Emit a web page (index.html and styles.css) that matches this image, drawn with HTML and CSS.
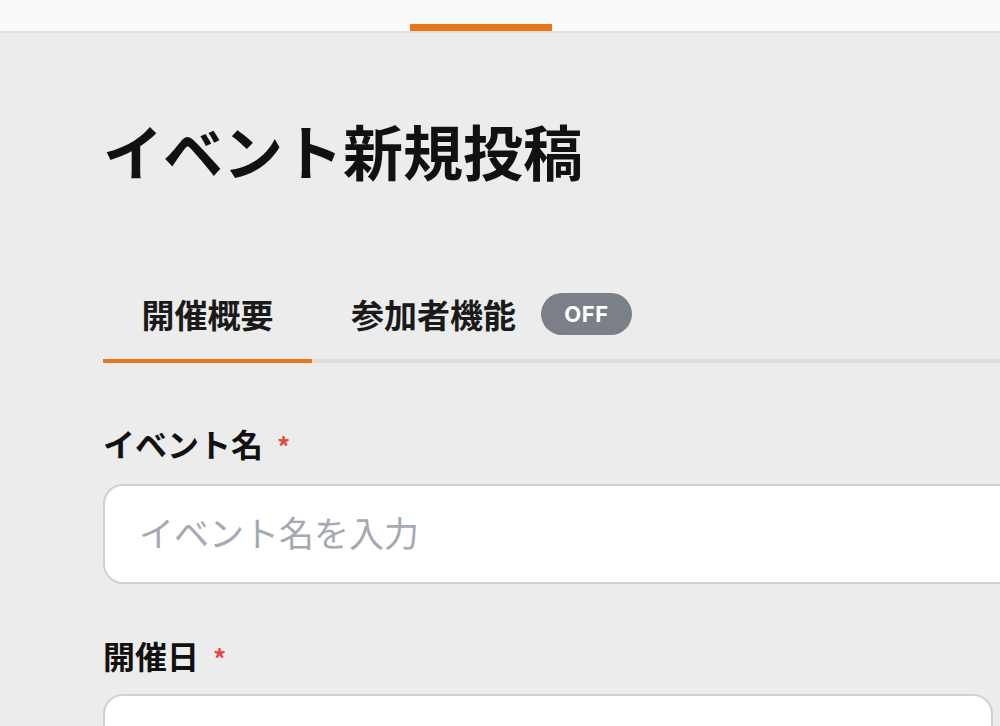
FILE: index.html
```html
<!DOCTYPE html>
<html lang="ja">
<head>
<meta charset="utf-8">
<title>イベント新規投稿</title>
<link rel="stylesheet" href="styles.css">
</head>
<body>
<header class="topbar">
  <div class="topbar-spacer"></div>
  <div class="topbar-active"></div>
</header>
<main class="page">
  <h1 class="page-title">イベント新規投稿</h1>
  <nav class="tabs">
    <div class="tab tab-active">開催概要</div>
    <div class="tab">参加者機能<span class="badge">OFF</span></div>
  </nav>
  <section class="form">
    <div class="field">
      <label class="label">イベント名<span class="req">*</span></label>
      <div class="input input-wide"><span class="placeholder">イベント名を入力</span></div>
    </div>
    <div class="field">
      <label class="label">開催日<span class="req">*</span></label>
      <div class="input input-date"></div>
    </div>
  </section>
</main>
</body>
</html>
```

FILE: styles.css
```css
* { box-sizing: border-box; }
html, body {
  margin: 0;
  padding: 0;
  width: 1000px;
  height: 726px;
  overflow: hidden;
  background: #ececec;
  font-family: "Noto Sans CJK JP", "Noto Sans", sans-serif;
  color: #111;
}
.topbar {
  height: 33px;
  background: #fafafa;
  border-bottom: 2px solid #dcdee3;
  display: flex;
  align-items: flex-end;
}
.topbar-spacer { width: 410px; }
.topbar-active {
  width: 142px;
  height: 7px;
  background: #e8761a;
}
.page {
  padding-left: 103px;
}
.page-title {
  margin: 0;
  padding-top: 77px;
  font-size: 60px;
  line-height: 80px;
  font-weight: 700;
  color: #111;
}
.tabs {
  margin-top: 105px;
  display: flex;
  align-items: flex-start;
  border-bottom: 4px solid #dcdde1;
  height: 68px;
}
.tab {
  display: flex;
  align-items: center;
  height: 64px;
  padding-bottom: 26px;
  font-size: 33px;
  font-weight: 700;
  color: #1a1a1a;
}
.tab-active {
  width: 209px;
  justify-content: center;
  height: 68px;
  border-bottom: 4px solid #e8761a;
}
.tab:not(.tab-active) {
  margin-left: 39px;
}
.badge {
  display: inline-flex;
  align-items: center;
  justify-content: center;
  margin-left: 25px;
  width: 91px;
  height: 42px;
  border-radius: 21px;
  background: #7b7f87;
  color: #fff;
  font-family: "Inter", "Noto Sans", sans-serif;
  font-size: 22px;
  font-weight: 700;
  letter-spacing: 0.5px;
}
.form {
  padding-top: 60px;
}
.field {
  margin-bottom: 51px;
}
.label {
  display: block;
  font-size: 32px;
  font-weight: 700;
  line-height: 40px;
  color: #111;
}
.req {
  color: #e4493f;
  margin-left: 14px;
  font-size: 26px;
}
.input {
  margin-top: 18px;
  height: 100px;
  background: #fff;
  border: 2px solid #cdd0d6;
  border-radius: 20px;
  display: flex;
  align-items: center;
  padding-left: 34px;
  padding-bottom: 6px;
}
.field + .field .input { margin-top: 16px; }
.input-wide { width: 960px; }
.input-date { width: 890px; }
.placeholder {
  font-size: 35px;
  color: #a5aab2;
  font-weight: 400;
}
```
